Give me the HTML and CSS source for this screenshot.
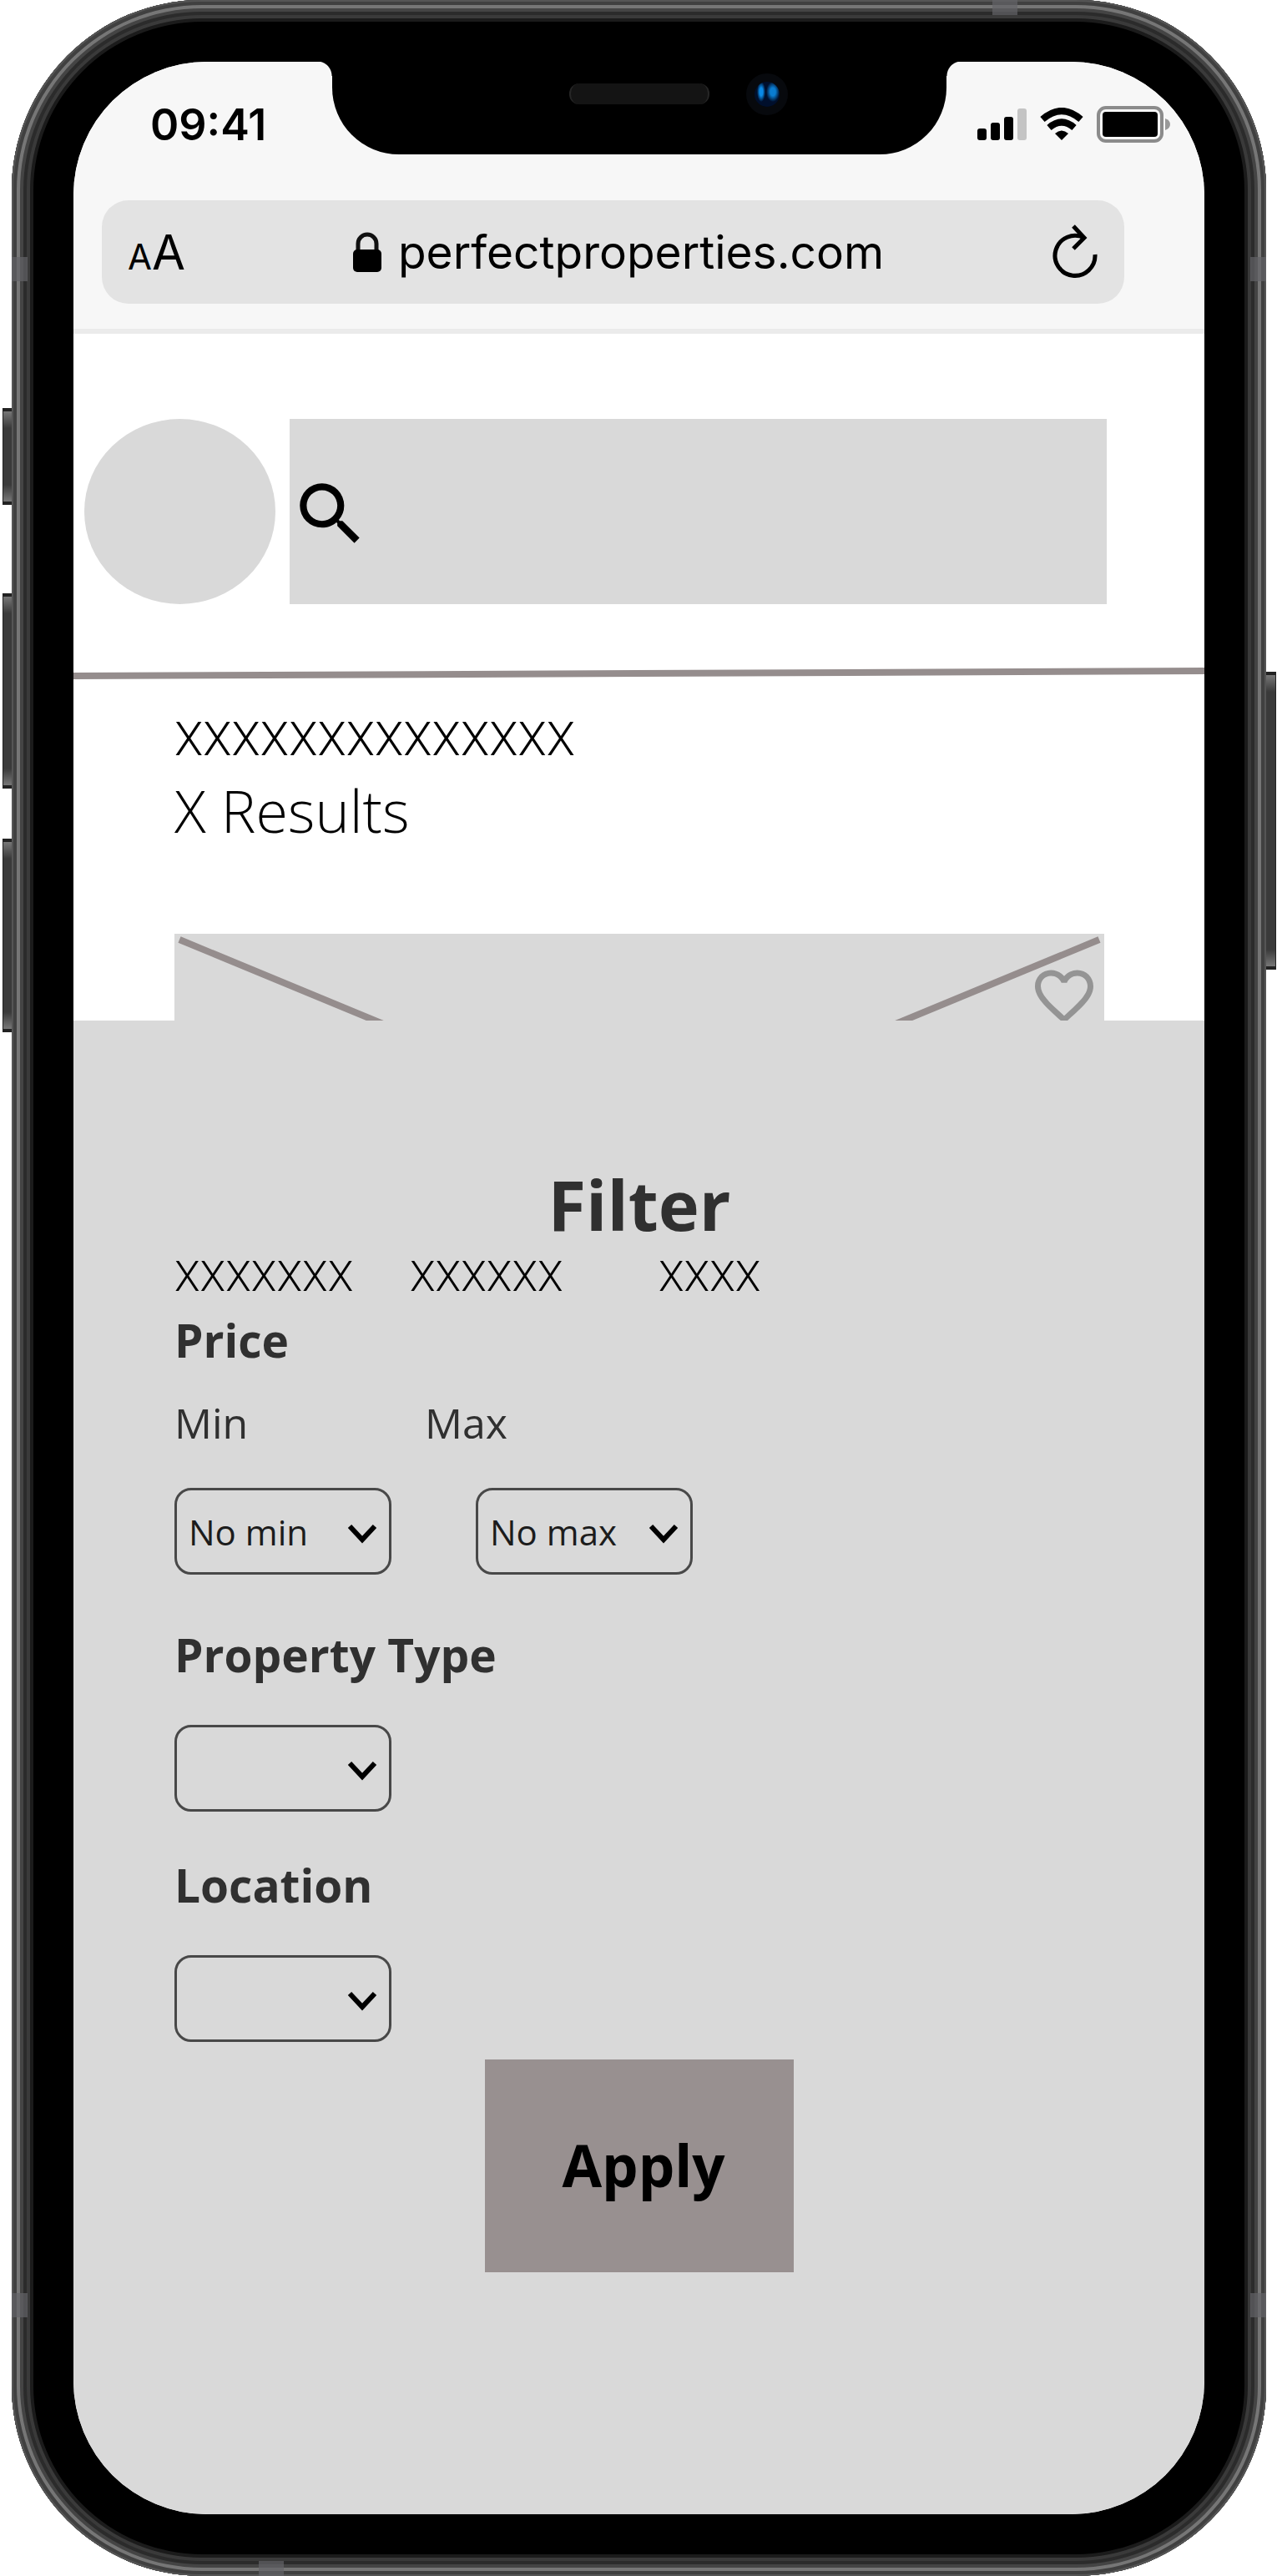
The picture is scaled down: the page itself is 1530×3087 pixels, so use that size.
FILE: index.html
```html
<!DOCTYPE html>
<html lang="en">
<head>
<meta charset="utf-8">
<meta name="viewport" content="width=device-width, initial-scale=1">
<title>Perfect Properties</title>
<link rel="stylesheet" href="styles.css">
</head>
<body>
<div class="phone">
  <span class="key key-mute"></span>
  <span class="key key-up"></span>
  <span class="key key-down"></span>
  <span class="key key-power"></span>
  <div class="frame">
    <span class="band band-left band-high"></span>
    <span class="band band-left band-low"></span>
    <span class="band band-right band-high"></span>
    <span class="band band-right band-low"></span>
    <span class="band band-top"></span>
    <span class="band band-bottom"></span>
    <div class="notch">
      <span class="speaker"></span>
      <span class="camera"></span>
    </div>
    <div class="screen">
      <header class="browser">
        <div class="status">
          <time class="clock">09:41</time>
          <div class="indicators">
            <svg class="signal" viewBox="0 0 60 40" aria-hidden="true">
              <rect x="1" y="25" width="11" height="14" rx="3"/>
              <rect x="17" y="18" width="11" height="21" rx="3"/>
              <rect x="33" y="11" width="11" height="28" rx="3"/>
              <rect x="49" y="1" width="11" height="38" rx="3" fill="#c4c4c4"/>
            </svg>
            <svg class="wifi" viewBox="0 0 52 40" aria-hidden="true">
              <path d="M3 14Q26-6 49 14" fill="none" stroke="#000" stroke-width="8"/>
              <path d="M11 24Q26 11 41 24" fill="none" stroke="#000" stroke-width="8"/>
              <path d="M18 31Q26 24 34 31L26 39Z"/>
            </svg>
            <svg class="battery" viewBox="0 0 88 44" aria-hidden="true">
              <rect x="2" y="2" width="76" height="40" rx="9" fill="none" stroke="#8b8b8b" stroke-width="4"/>
              <rect x="7" y="7" width="66" height="30" rx="4"/>
              <path d="M82 15q6 2 6 7t-6 7z" fill="#999"/>
            </svg>
          </div>
        </div>
        <div class="address">
          <button class="text-size" type="button" aria-label="Text size"><small>A</small>A</button>
          <a class="site" href="#">
            <svg class="lock" viewBox="0 0 34 48" aria-hidden="true">
              <path d="M6 23V14a11 11 0 0 1 22 0v9" fill="none" stroke="#111" stroke-width="5"/>
              <rect x="0" y="21" width="34" height="27" rx="5"/>
            </svg>
            <span>perfectproperties.com</span>
          </a>
          <button class="reload" type="button" aria-label="Reload">
            <svg viewBox="0 0 56 66" aria-hidden="true">
              <path d="M39 16A24 24 0 1 0 52 36M26 2l13 14-13 13" fill="none" stroke="#000" stroke-width="5"/>
            </svg>
          </button>
        </div>
      </header>

      <div class="masthead">
        <span class="logo"></span>
        <label class="search">
          <svg viewBox="0 0 24 24" aria-hidden="true"><path d="M15.500 14h-.79l-.28-.27A6.471 6.471 0 0 0 16 9.500 6.500 6.500 0 1 0 9.500 16c1.610 0 3.090-.59 4.230-1.570l.27.28v.79l5 4.990L20.490 19l-4.990-5zm-6 0C7.010 14 5 11.990 5 9.500S7.010 5 9.500 5 14 7.010 14 9.500 11.990 14 9.500 14z"/></svg>
          <input type="search" aria-label="Search">
        </label>
      </div>
      <svg class="divider" viewBox="0 0 1355 14" preserveAspectRatio="none" aria-hidden="true">
        <path d="M0 10L1355 4" stroke="#958d8d" stroke-width="8"/>
      </svg>

      <main class="results">
        <h1 class="query">XXXXXXXXXXXXXX</h1>
        <p class="count">X Results</p>
        <article class="card">
          <svg class="cross" viewBox="0 0 1114 104" preserveAspectRatio="none" aria-hidden="true">
            <path d="M6 7L250 108M1108 7L864 108" stroke="#958d8d" stroke-width="8"/>
          </svg>
          <button class="favourite" type="button" aria-label="Save property">
            <svg viewBox="0 0 24 24" aria-hidden="true"><path d="M16.500 3c-1.740 0-3.410.81-4.500 2.090C10.910 3.810 9.240 3 7.500 3 4.420 3 2 5.420 2 8.500c0 3.780 3.400 6.860 8.550 11.540L12 21.350l1.450-1.320C18.600 15.360 22 12.280 22 8.500 22 5.420 19.580 3 16.500 3zm-4.400 15.550l-.1.1-.1-.1C7.140 14.240 4 11.390 4 8.500 4 6.500 5.500 5 7.500 5c1.540 0 3.040.99 3.570 2.360h1.870C13.460 5.990 14.960 5 16.500 5c2 0 3.500 1.500 3.500 3.500 0 2.890-3.140 5.740-7.900 10.050z"/></svg>
          </button>
        </article>
      </main>

      <form class="sheet">
        <h2 class="sheet-title">Filter</h2>
        <nav class="tabs">
          <a href="#">XXXXXXX</a>
          <a href="#">XXXXXX</a>
          <a href="#">XXXX</a>
        </nav>
        <h3 class="group">Price</h3>
        <div class="range-labels">
          <label for="min">Min</label>
          <label for="max">Max</label>
        </div>
        <div class="range">
          <div class="picker">
            <select id="min"><option>No min</option></select>
            <svg viewBox="0 0 36 24" aria-hidden="true"><path d="M3 3L18 19L33 3"/></svg>
          </div>
          <div class="picker">
            <select id="max"><option>No max</option></select>
            <svg viewBox="0 0 36 24" aria-hidden="true"><path d="M3 3L18 19L33 3"/></svg>
          </div>
        </div>
        <label class="group field" for="type">Property Type</label>
        <div class="picker">
          <select id="type"><option></option></select>
          <svg viewBox="0 0 36 24" aria-hidden="true"><path d="M3 3L18 19L33 3"/></svg>
        </div>
        <label class="group field" for="location">Location</label>
        <div class="picker">
          <select id="location"><option></option></select>
          <svg viewBox="0 0 36 24" aria-hidden="true"><path d="M3 3L18 19L33 3"/></svg>
        </div>
        <button class="apply" type="button">Apply</button>
      </form>
    </div>
  </div>
</div>
</body>
</html>
```
FILE: styles.css
```css
* { box-sizing: border-box; }

body {
  margin: 0;
  background: #fff;
  color: #000;
  font-family: "Open Sans", "Noto Sans", sans-serif;
}

h1, h2, h3, p { margin: 0; }
a { color: inherit; text-decoration: none; }
svg { display: block; }
button, input, select { font: inherit; color: inherit; border: 0; background: none; padding: 0; margin: 0; }

/* Handset */
.phone { position: relative; padding: 0 13px 0 14px; }

.frame {
  position: relative;
  padding: 74px;
  border-radius: 228px;
  background: #000;
  box-shadow:
    inset 0 0 0 2px #555,
    inset 0 0 0 6px #404040,
    inset 0 0 0 10px #767676,
    inset 0 0 0 14px #444,
    inset 0 0 0 18px #2b2b2b,
    inset 0 0 0 22px #3a3a3a,
    inset 0 0 0 26px #1b1b1b;
}

.key {
  position: absolute;
  width: 16px;
  border: 1px solid #222;
  border-width: 4px 1px;
  background: linear-gradient(#777, #3a3a3a 20px, #3a3a3a calc(100% - 20px), #777);
}
.key-mute { left: 3px; top: 489px; height: 116px; }
.key-up { left: 3px; top: 711px; height: 234px; }
.key-down { left: 3px; top: 1005px; height: 232px; }
.key-power { right: 1px; top: 805px; height: 357px; }

.band { position: absolute; background: #646468; opacity: .7; }
.band-left, .band-right { width: 19px; height: 29px; }
.band-left { left: 0; }
.band-right { right: 0; }
.band-high { top: 308px; }
.band-low { bottom: 310px; }
.band-top, .band-bottom { width: 30px; height: 18px; }
.band-top { top: 0; right: 298px; }
.band-bottom { bottom: 0; left: 296px; }

.notch {
  position: absolute;
  z-index: 1;
  top: 73px;
  left: 50%;
  width: 736px;
  height: 112px;
  margin-left: -368px;
  border-radius: 0 0 80px 80px;
  background: #000;
}
.notch::before, .notch::after {
  content: "";
  position: absolute;
  top: 0;
  width: 18px;
  height: 18px;
}
.notch::before { right: 100%; background: radial-gradient(circle at 0 100%, transparent 17px, #000 18px); }
.notch::after { left: 100%; background: radial-gradient(circle at 100% 100%, transparent 17px, #000 18px); }
.speaker {
  position: absolute;
  left: 284px;
  top: 27px;
  width: 168px;
  height: 25px;
  border: 2px solid #262626;
  border-width: 0 2px;
  border-radius: 12px;
  background: #141414;
}
.camera {
  position: absolute;
  left: 496px;
  top: 15px;
  width: 50px;
  height: 50px;
  border: 10px solid #07090d;
  border-radius: 50%;
  background:
    radial-gradient(ellipse 5px 12px at 8px 12px, #0a8ae6 40%, transparent),
    radial-gradient(ellipse 8px 12px at 22px 12px, #0a7cd0 40%, transparent),
    #000f2c;
}

.screen {
  overflow: hidden;
  border-radius: 160px;
  background: #fff;
}

/* Browser chrome */
.browser {
  padding-bottom: 30px;
  border-bottom: 6px solid #ebebeb;
  background: #f7f7f7;
  font-family: Inter, "Liberation Sans", sans-serif;
}
.status {
  display: flex;
  align-items: center;
  justify-content: space-between;
  height: 150px;
  padding: 0 41px 0 92px;
}
.clock { font-size: 52px; font-weight: 600; }
.indicators { display: flex; align-items: center; gap: 16px; }
.signal { width: 60px; height: 40px; }
.wifi { width: 52px; height: 40px; }
.battery { width: 88px; height: 44px; }

.address {
  display: flex;
  align-items: center;
  justify-content: space-between;
  height: 124px;
  margin: 16px 96px 0 34px;
  padding: 0 31px;
  border-radius: 32px;
  background: #e3e3e3;
}
.text-size { font-size: 58px; }
.text-size small { font-size: 42px; }
.site { display: flex; align-items: center; gap: 20px; font-size: 55px; }
.lock { width: 34px; height: 48px; }
.reload svg { width: 56px; height: 66px; }

/* Site header */
.masthead {
  display: flex;
  gap: 17px;
  padding: 102px 117px 76px 13px;
}
.logo { width: 229px; height: 222px; border-radius: 50%; background: #d9d9d9; }
.search {
  display: flex;
  flex: 1;
  align-items: center;
  background: #d9d9d9;
}
.search svg { width: 98px; height: 98px; margin-top: 6px; }
.search input { flex: 1; min-width: 0; height: 100%; font-size: 50px; outline: 0; }
.divider { width: 100%; height: 14px; }

/* Results */
.results { padding: 30px 120px 0 121px; }
.query { font: 300 56px/84px Roboto, sans-serif; }
.count { font-size: 70px; font-weight: 300; line-height: 86px; }
.card {
  position: relative;
  height: 104px;
  margin-top: 105px;
  overflow: hidden;
  background: #d9d9d9;
}
.cross { width: 100%; height: 104px; }
.favourite { position: absolute; right: 6px; top: 33px; }
.favourite svg { width: 84px; height: 84px; fill: #949494; }

/* Filter sheet */
.sheet {
  padding: 170px 120px 290px 121px;
  background: #d9d9d9;
  color: #303030;
}
.sheet-title { font-size: 83px; line-height: 100px; text-align: center; }
.tabs {
  display: grid;
  grid-template-columns: 282px 298px auto;
  color: #000;
  font: 300 50px/75px Roboto, sans-serif;
}
.group { display: block; font-size: 55px; font-weight: 700; line-height: 76px; }
.range-labels {
  display: grid;
  grid-template-columns: 300px auto;
  margin-top: 26px;
  font-size: 50px;
  font-weight: 500;
  line-height: 70px;
}
.range { display: flex; gap: 101px; margin: 43px 0 58px; }
.picker { position: relative; width: 260px; }
.picker select {
  width: 100%;
  height: 104px;
  padding-left: 14px;
  border: 3px solid #484848;
  border-radius: 20px;
  appearance: none;
  color: #1c1c1c;
  font-size: 42px;
  display: block;
}
.picker svg {
  position: absolute;
  right: 17px;
  top: 43px;
  width: 36px;
  height: 24px;
  fill: none;
  stroke: #000;
  stroke-width: 6px;
  pointer-events: none;
}
.field { margin-bottom: 46px; }
.picker + .field { margin-top: 50px; }
.apply {
  display: block;
  width: 370px;
  height: 255px;
  margin: 21px auto 0;
  padding: 0 0 4px 10px;
  background: #989090;
  color: #000;
  font-size: 69px;
  font-weight: 700;
}
```
